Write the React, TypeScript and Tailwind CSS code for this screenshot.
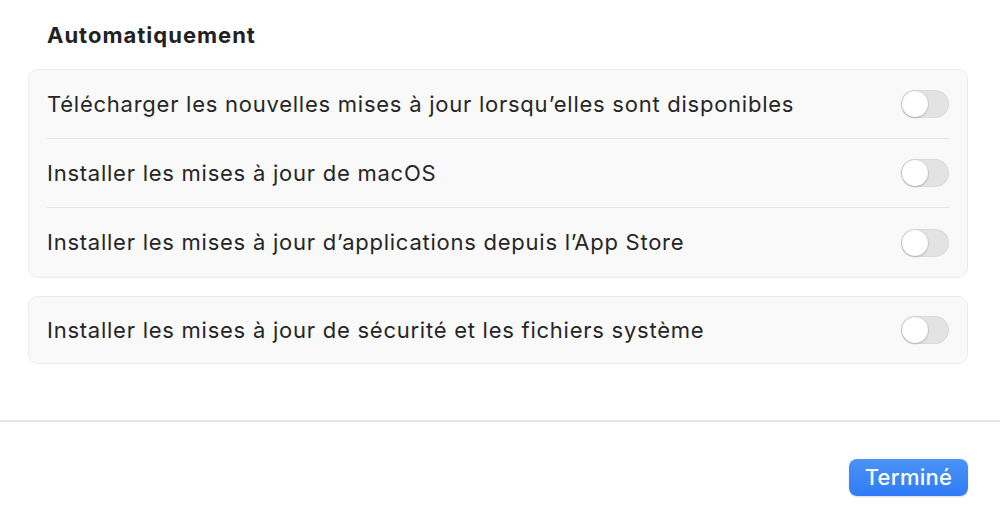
const font = { fontFamily: 'Inter, "Noto Sans", sans-serif' };

function Toggle() {
  return (
    <div className="relative h-[28px] w-[48px] shrink-0 rounded-full bg-[#e3e3e3] shadow-[inset_0_0_0_1px_rgba(0,0,0,0.04)]">
      <div className="absolute left-[1px] top-[1px] h-[26px] w-[26px] rounded-full bg-white shadow-[0_0.5px_2px_rgba(0,0,0,0.35)]" />
    </div>
  );
}

function Row({ label, last, tall = true }: { label: string; last?: boolean; tall?: boolean }) {
  return (
    <div className="px-[18px]">
      <div className={`flex ${tall ? 'h-[69px]' : 'h-[66px]'} items-center justify-between ${last ? '' : 'border-b border-[#e6e6e6]'}`}>
        <span className="text-[22px] tracking-[0.75px] text-[#262626]">{label}</span>
        <Toggle />
      </div>
    </div>
  );
}

export default function App() {
  return (
    <div className="h-[522px] w-[1000px] bg-white" style={font}>
      <div className="pl-[28px] pr-[32px] pt-[19px]">
        <h2 className="pl-[19px] text-[22px] font-bold tracking-[1px] text-[#222]">Automatiquement</h2>
        <div className="mt-[17px] rounded-[10px] border border-[#ebebeb] bg-[#f9f9f9]">
          <Row label="Télécharger les nouvelles mises à jour lorsqu’elles sont disponibles" />
          <Row label="Installer les mises à jour de macOS" />
          <Row label="Installer les mises à jour d’applications depuis l’App Store" last />
        </div>
        <div className="mt-[18px] rounded-[10px] border border-[#ebebeb] bg-[#f9f9f9]">
          <Row label="Installer les mises à jour de sécurité et les fichiers système" last tall={false} />
        </div>
      </div>
      <div className="mt-[56px] border-t-2 border-[#e5e5e5]" />
      <div className="flex justify-end px-[32px] pt-[37px]">
        <button className="h-[37px] w-[119px] rounded-[8px] bg-gradient-to-b from-[#4b93f8] to-[#2f7bf5] text-[22px] font-medium tracking-[0.3px] text-white shadow-[0_1px_2px_rgba(0,0,0,0.15)]">
          Terminé
        </button>
      </div>
    </div>
  );
}
